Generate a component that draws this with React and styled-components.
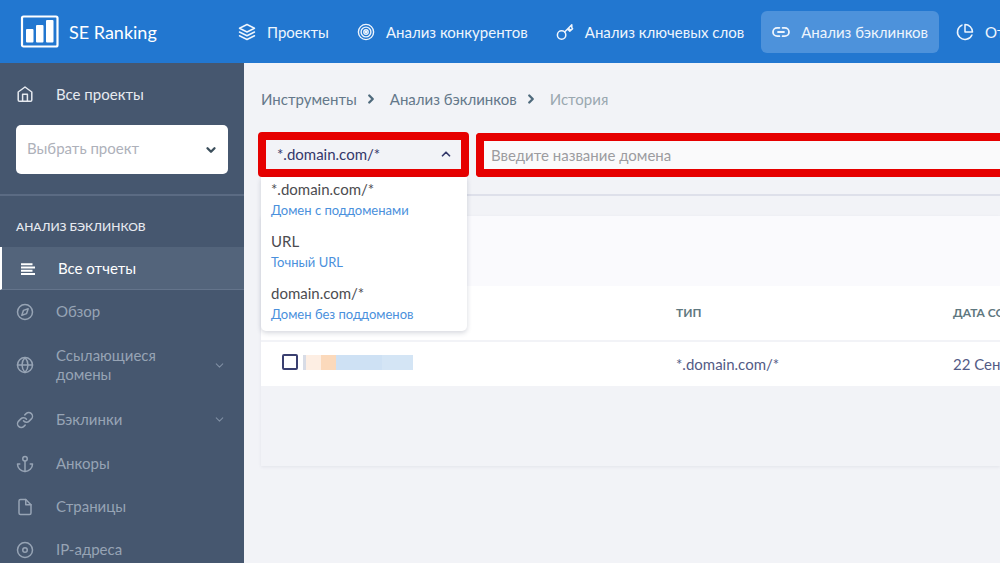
import React, { useState } from "react";
import styled, { createGlobalStyle, css } from "styled-components";
import {
  FiAnchor,
  FiChevronDown,
  FiChevronUp,
  FiChevronRight,
  FiCompass,
  FiDisc,
  FiFile,
  FiGlobe,
  FiLayers,
  FiLink,
  FiPieChart,
} from "react-icons/fi";

const HeaderColor = "#2277d0";
const SidebarColor = "#46576f";
const PageColor = "#f2f3f7";
const LinkColor = "#4a90dc";
const MarkColor = "#e60000";

const GlobalStyle = createGlobalStyle`
  * {
    box-sizing: border-box;
  }

  body {
    margin: 0;
    overflow: hidden;
    background-color: ${PageColor};
    font-family: Lato, "Noto Sans", sans-serif;
    font-size: 15px;
  }

  button, input, select {
    font: inherit;
  }

  a {
    color: inherit;
    text-decoration: none;
  }
`;

const Page = styled.div`
  display: flex;
  flex-direction: column;
  height: 100vh;
  overflow: hidden;
`;

const Header = styled.header`
  display: flex;
  flex: none;
  align-items: center;
  height: 63px;
  background-color: ${HeaderColor};
  color: #fff;
  white-space: nowrap;
`;

const Brand = styled.a`
  display: flex;
  flex: none;
  align-items: center;
  gap: 10px;
  width: 227px;
  padding-left: 20px;
  font-size: 18px;
`;

const Nav = styled.nav`
  display: flex;
  flex: none;
  gap: 6px;
`;

const NavLink = styled.a`
  display: flex;
  align-items: center;
  gap: 11px;
  height: 42px;
  padding: 0 11px;
  border-radius: 6px;
  color: #eef5fd;
  background-color: ${({ $active }) => ($active ? "#4d92db" : "transparent")};

  svg {
    flex: none;
  }
`;

const Body = styled.div`
  display: flex;
  flex: 1;
  min-height: 0;
`;

const Sidebar = styled.aside`
  flex: none;
  width: 244px;
  overflow: hidden;
  background-color: ${SidebarColor};
  color: #e6eaf0;
`;

const ProjectBlock = styled.div`
  padding: 0 16px 20px;
  border-bottom: 2px solid #5b6b83;
`;

const AllProjects = styled.a`
  display: flex;
  align-items: center;
  gap: 22px;
  height: 62px;
  padding-bottom: 1px;

  svg {
    width: 18px;
  }
`;

const SelectBox = styled.div`
  display: grid;
  align-items: center;

  > * {
    grid-area: 1 / 1;
  }

  svg {
    justify-self: end;
    margin-right: 10px;
    color: #3c4f5c;
    pointer-events: none;
  }
`;

const ProjectSelect = styled.select`
  appearance: none;
  width: 100%;
  height: 49px;
  padding: 0 32px 4px 11px;
  border: none;
  border-radius: 5px;
  background-color: #fff;
  color: #aeb1ba;
`;

const SectionTitle = styled.h2`
  margin: 0;
  padding: 10px 16px 0;
  font-size: 12px;
  font-weight: 500;
  line-height: 41px;
`;

const MenuItem = styled.a`
  display: flex;
  align-items: center;
  gap: 22px;
  padding: ${({ $nested }) => ($nested ? "13px" : "12px")} 18px
    ${({ $nested }) => ($nested ? "13px" : "12px")} 16px;
  line-height: 19px;
  color: #97a4b5;

  > svg:first-child {
    flex: none;
    width: 18px;
  }

  > svg:last-child {
    color: #7f8ea3;
  }

  ${({ $active }) =>
    $active &&
    css`
      padding-bottom: 11px;
      border-left: 2px solid #fff;
      border-bottom: 1px solid #64748b;
      background-color: #53647b;
      color: #fff;
    `}
`;

const MenuText = styled.span`
  flex: 1;
`;

const Main = styled.main`
  flex: 1;
  min-width: 0;
  padding-left: 17px;
  overflow: hidden;
`;

const Top = styled.div`
  padding: 24px 0 17px;
  border-bottom: 2px solid #dee0ea;
`;

const Breadcrumbs = styled.nav`
  display: flex;
  align-items: center;
  gap: 7px;
  line-height: 24px;
  color: #64788a;
  white-space: nowrap;

  svg {
    margin-right: 5px;
    color: #4f6a7c;
  }
`;

const Current = styled.span`
  color: #9aa8b0;
`;

const SearchRow = styled.div`
  display: flex;
  align-items: flex-start;
  gap: 7px;
  margin-left: -3px;
  padding-top: 21px;
`;

const Combo = styled.div`
  position: relative;
  width: 211px;
`;

const ComboButton = styled.button`
  display: flex;
  align-items: center;
  justify-content: space-between;
  width: 100%;
  height: 45px;
  padding: 0 8px 1px 11px;
  border: 8px solid ${MarkColor};
  border-radius: 4px;
  background-color: ${PageColor};
  color: #34386a;
`;

const Options = styled.ul`
  position: absolute;
  top: 100%;
  left: 3px;
  z-index: 1;
  width: 206px;
  margin: 0;
  padding: 2px 0 6px;
  border-radius: 0 0 5px 5px;
  background-color: #fff;
  box-shadow: 0 2px 5px rgba(50, 60, 90, 0.2);
  list-style: none;
`;

const Option = styled.li`
  padding: 0 10px 10px;
  color: #4c4c50;
  line-height: 21px;
  cursor: pointer;

  &:last-child {
    padding-bottom: 0;
  }
`;

const OptionHint = styled.span`
  display: block;
  font-size: 13px;
  color: ${LinkColor};
`;

const DomainInput = styled.input`
  flex: 1;
  min-width: 0;
  height: 44px;
  margin-top: 1px;
  padding: 0 7px 1px;
  border: 8px solid ${MarkColor};
  border-right: none;
  border-radius: 4px 0 0 4px;
  outline: none;
  background-color: #fafafb;

  &::placeholder {
    color: #9c9ca0;
    opacity: 1;
  }
`;

const Card = styled.section`
  height: 250px;
  margin-top: 20px;
  overflow: hidden;
  box-shadow: 0 1px 3px rgba(50, 60, 90, 0.08);
`;

const CardTop = styled.div`
  height: 70px;
  background-color: #fafafd;
`;

const Table = styled.table`
  width: 150%;
  border-collapse: collapse;
  table-layout: fixed;
  background-color: #fff;
  color: #535b86;
  text-align: left;
  white-space: nowrap;

  th {
    height: 55px;
    padding: 0 0 1px;
    border-bottom: 2px solid ${PageColor};
    font-size: 12px;
    color: #5f7880;
  }

  td {
    height: 45px;
    padding: 0;
  }
`;

const Column = styled.col`
  width: ${({ $width }) => $width};
`;

const DomainCell = styled.div`
  display: flex;
  align-items: center;
  gap: 5px;
  padding: 0 0 4px 21px;
`;

const Checkbox = styled.input.attrs({ type: "checkbox" })`
  appearance: none;
  width: 16px;
  height: 16px;
  margin: 0;
  border: 2px solid #3a3f70;
  border-radius: 2px;

  &:checked {
    background-color: #3a3f70;
  }
`;

const HiddenDomain = styled.div`
  width: 110px;
  height: 15px;
  background: linear-gradient(
    to right,
    #d8dce6 0 3px,
    #fdeee3 3px 18px,
    #fbd9bb 18px 33px,
    #cee1f4 33px 79px,
    #d4e5f5 79px
  );
`;

const LogoIcon = () => (
  <svg width="39" height="33" viewBox="0 0 39 33" fill="#fff" aria-hidden="true">
    <rect x="2" y="1.5" width="35.5" height="30" rx="1.5" fill="none" stroke="#fff" strokeWidth="2.2" />
    <rect x="6" y="14" width="7.5" height="13.5" rx="1" />
    <rect x="16" y="10" width="7.5" height="17.5" rx="1" />
    <rect x="26" y="5" width="7.5" height="22.5" rx="1" />
  </svg>
);

const TargetIcon = () => (
  <svg width="18" height="18" viewBox="0 0 18 18" fill="none" stroke="currentColor" strokeWidth="1.4">
    <circle cx="9" cy="9" r="7.6" />
    <circle cx="9" cy="9" r="4.9" />
    <circle cx="9" cy="9" r="2.2" />
    <circle cx="9" cy="9" r="0.6" />
  </svg>
);

const KeyIcon = () => (
  <svg
    width="18"
    height="18"
    viewBox="0 0 18 18"
    fill="none"
    stroke="currentColor"
    strokeWidth="1.5"
    strokeLinejoin="round"
    strokeLinecap="round"
  >
    <circle cx="5.6" cy="12" r="4.2" />
    <path d="M8.6 9 15.8 1.8V4.6L16.6 5.6 13.8 8.2 11.8 6.2M12.6 5.2 14.6 7.2" />
  </svg>
);

const ChainIcon = () => (
  <svg width="18" height="18" viewBox="0 0 18 18" fill="none" stroke="currentColor" strokeWidth="1.8" strokeLinecap="round">
    <path d="M7.4 4.8H5.2a4.2 4.2 0 0 0 0 8.4h2.2M10.6 4.8h2.2a4.2 4.2 0 0 1 0 8.4h-2.2M6 9h6" />
  </svg>
);

const HomeIcon = () => (
  <svg width="18" height="18" viewBox="0 0 18 18" fill="none" stroke="currentColor" strokeWidth="1.5" strokeLinejoin="round">
    <path d="M2.2 7 9 2l6.8 5v8a1.3 1.3 0 0 1-1.3 1.3h-11A1.3 1.3 0 0 1 2.2 15z" />
    <path d="M6.6 16V9.2h4.8V16" />
  </svg>
);

const ReportIcon = () => (
  <svg width="18" height="18" viewBox="0 0 18 18" stroke="currentColor" strokeWidth="2">
    <path d="M3 4.2h11.5M3 7.5h14M3 10.8h11.5M3 14.1h14" />
  </svg>
);

const navLinks = [
  { label: "Проекты", icon: <FiLayers size={18} /> },
  { label: "Анализ конкурентов", icon: <TargetIcon /> },
  { label: "Анализ ключевых слов", icon: <KeyIcon /> },
  { label: "Анализ бэклинков", icon: <ChainIcon />, active: true },
  { label: "Отчеты", icon: <FiPieChart size={18} /> },
];

const menu = [
  { label: "Все отчеты", icon: <ReportIcon />, active: true },
  { label: "Обзор", icon: <FiCompass size={18} /> },
  { label: "Ссылающиеся домены", icon: <FiGlobe size={18} />, nested: true },
  { label: "Бэклинки", icon: <FiLink size={18} />, nested: true },
  { label: "Анкоры", icon: <FiAnchor size={18} /> },
  { label: "Страницы", icon: <FiFile size={18} /> },
  { label: "IP-адреса", icon: <FiDisc size={18} /> },
];

const modes = [
  { value: "*.domain.com/*", hint: "Домен с поддоменами" },
  { value: "URL", hint: "Точный URL" },
  { value: "domain.com/*", hint: "Домен без поддоменов" },
];

const ModePicker = () => {
  const [open, setOpen] = useState(true);
  const [mode, setMode] = useState(modes[0].value);

  const onPick = (value) => {
    setMode(value);
    setOpen(false);
  };

  const Chevron = open ? FiChevronUp : FiChevronDown;

  return (
    <Combo>
      <ComboButton
        type="button"
        aria-haspopup="listbox"
        aria-expanded={open}
        onClick={() => setOpen(!open)}
      >
        {mode}
        <Chevron size={14} strokeWidth={3} />
      </ComboButton>
      {open && (
        <Options role="listbox" aria-label="Режим">
          {modes.map(({ value, hint }) => (
            <Option
              key={value}
              role="option"
              aria-selected={value === mode}
              onClick={() => onPick(value)}
            >
              {value}
              <OptionHint>{hint}</OptionHint>
            </Option>
          ))}
        </Options>
      )}
    </Combo>
  );
};

const App = () => {
  const [domain, setDomain] = useState("");

  return (
    <Page>
      <GlobalStyle />
      <Header>
        <Brand href="#">
          <LogoIcon />
          SE Ranking
        </Brand>
        <Nav>
          {navLinks.map(({ label, icon, active }) => (
            <NavLink key={label} href="#" $active={active}>
              {icon}
              {label}
            </NavLink>
          ))}
        </Nav>
      </Header>
      <Body>
        <Sidebar>
          <ProjectBlock>
            <AllProjects href="#">
              <HomeIcon />
              Все проекты
            </AllProjects>
            <SelectBox>
              <ProjectSelect aria-label="Проект">
                <option>Выбрать проект</option>
              </ProjectSelect>
              <FiChevronDown size={14} strokeWidth={4} />
            </SelectBox>
          </ProjectBlock>
          <SectionTitle>АНАЛИЗ БЭКЛИНКОВ</SectionTitle>
          <nav>
            {menu.map(({ label, icon, active, nested }) => (
              <MenuItem key={label} href="#" $active={active} $nested={nested}>
                {icon}
                <MenuText>{label}</MenuText>
                {nested && <FiChevronDown size={13} />}
              </MenuItem>
            ))}
          </nav>
        </Sidebar>
        <Main>
          <Top>
            <Breadcrumbs>
              <a href="#">Инструменты</a>
              <FiChevronRight size={14} strokeWidth={4} />
              <a href="#">Анализ бэклинков</a>
              <FiChevronRight size={14} strokeWidth={4} />
              <Current>История</Current>
            </Breadcrumbs>
            <SearchRow>
              <ModePicker />
              <DomainInput
                aria-label="Домен"
                placeholder="Введите название домена"
                value={domain}
                onChange={(e) => setDomain(e.target.value)}
              />
            </SearchRow>
          </Top>
          <Card>
            <CardTop />
            <Table>
              <colgroup>
                <Column $width="415px" />
                <Column $width="277px" />
                <Column />
              </colgroup>
              <thead>
                <tr>
                  <th aria-label="Домен" />
                  <th>ТИП</th>
                  <th>ДАТА СОЗДАНИЯ</th>
                </tr>
              </thead>
              <tbody>
                <tr>
                  <td>
                    <DomainCell>
                      <Checkbox aria-label="Выбрать домен" />
                      <HiddenDomain />
                    </DomainCell>
                  </td>
                  <td>*.domain.com/*</td>
                  <td>22 Сен</td>
                </tr>
              </tbody>
            </Table>
          </Card>
        </Main>
      </Body>
    </Page>
  );
};

export default App;
